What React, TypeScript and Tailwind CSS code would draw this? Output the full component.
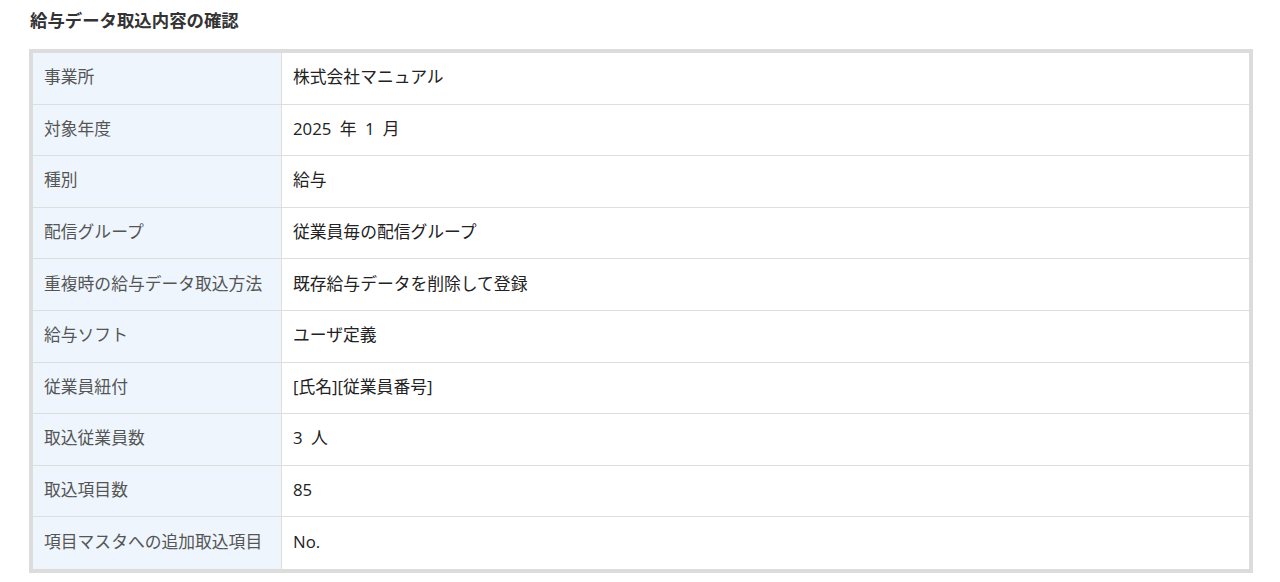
const rows: [string, string][] = [
  ['事業所', '株式会社マニュアル'],
  ['対象年度', '2025 年 1 月'],
  ['種別', '給与'],
  ['配信グループ', '従業員毎の配信グループ'],
  ['重複時の給与データ取込方法', '既存給与データを削除して登録'],
  ['給与ソフト', 'ユーザ定義'],
  ['従業員紐付', '[氏名][従業員番号]'],
  ['取込従業員数', '3 人'],
  ['取込項目数', '85'],
  ['項目マスタへの追加取込項目', 'No.'],
];

export default function App() {
  return (
    <div
      className="w-[1280px] h-[582px] bg-white overflow-hidden"
      style={{ fontFamily: '"Open Sans", "Noto Sans CJK JP", sans-serif' }}
    >
      <h2 className="pl-[30px] pt-[8px] h-[49px] text-[17.4px] leading-[24px] font-bold text-[#333]">
        給与データ取込内容の確認
      </h2>
      <div className="ml-[29px] w-[1224px] border-[4px] border-[#dcdcdc]">
        {rows.map(([label, value], i) => (
          <div
            key={label}
            className={`flex h-[51.6px] ${i < rows.length - 1 ? 'border-b border-[#dedede]' : ''}`}
          >
            <div className="w-[249px] shrink-0 flex items-center px-[11px] pb-[3px] bg-[#eef5fd] border-r border-[#dedede] text-[16.8px] text-[#555]">
              {label}
            </div>
            <div className="flex-1 flex items-center px-[11px] pb-[3px] text-[16.8px] text-[#222] [word-spacing:4px]">
              {value}
            </div>
          </div>
        ))}
      </div>
    </div>
  );
}
